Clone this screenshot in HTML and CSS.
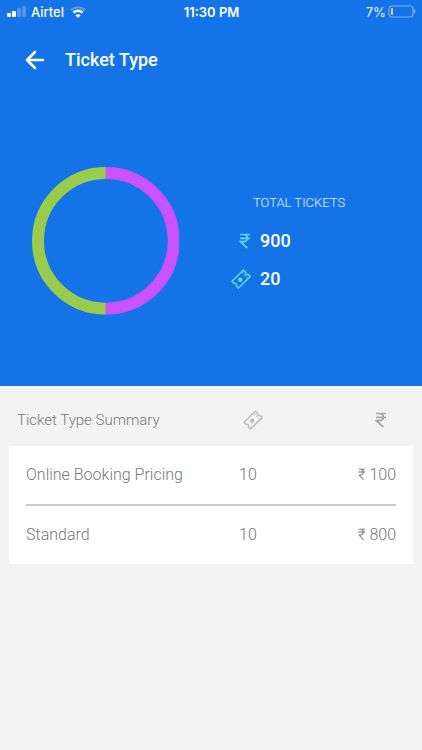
FILE: index.html
```html
<!DOCTYPE html>
<html lang="en">
<head>
<meta charset="utf-8">
<meta name="viewport" content="width=device-width, initial-scale=1">
<title>Ticket Type</title>
<link rel="stylesheet" href="styles.css">
</head>
<body>
<svg class="defs" aria-hidden="true">
  <symbol id="ticket" viewBox="0 0 20 20">
    <g fill="none" stroke="currentColor" stroke-width="1.5" stroke-linejoin="round">
      <path d="M1 12.2 12.6 1 L14.6 3 C14 4.600 15.400 6.200 17.200 5.400 L19.200 7.600 7.400 19 5.400 17 C6.200 15.200 4.600 13.800 3 14.400 Z"/>
      <path d="m11 3.200 1.300 1.400m1.200 1.300 1.100 1.200m1.200 1.300 1.100 1.200" stroke-width="1.200"/>
    </g>
    <circle cx="9.300" cy="10.800" r="2.200" fill="currentColor"/>
  </symbol>
  <symbol id="rupee" viewBox="0 0 12 16">
    <path d="M1 1.500h10M1 5.300h10M1 1.500h3.200c5.400 0 5.400 7.200 0 7.200H1.500L8.300 15.200" fill="none" stroke="currentColor" stroke-width="1.700"/>
  </symbol>
</svg>
<header class="hero">
  <div class="status">
    <div class="carrier">
      <svg width="20" height="12" viewBox="0 0 20 12" fill="#fff" aria-hidden="true">
        <rect x="0" y="7" width="4" height="4" rx="1"/>
        <rect x="5" y="5" width="4" height="6" rx="1"/>
        <rect x="10" y="2" width="4" height="9" rx="1" opacity=".25"/>
        <rect x="15" y="0" width="4" height="11" rx="1" opacity=".25"/>
      </svg>
      <span>Airtel</span>
      <svg width="16" height="12" viewBox="0 0 16 12" fill="none" stroke="#fff" stroke-width="2" aria-hidden="true">
        <path d="M1 4.200C5 .2 11 .2 15 4.200" opacity=".3"/>
        <path d="M3.400 6.700c2.600-2.600 6.600-2.600 9.200 0" stroke-width="2.400"/>
        <path d="M5.400 9.200c1.400-1.400 3.800-1.400 5.200 0L8 12z" fill="#fff" stroke="none"/>
      </svg>
    </div>
    <time class="clock">11:30 PM</time>
    <div class="battery">
      <span>7%</span>
      <svg width="28" height="14" viewBox="0 0 28 14" aria-hidden="true">
        <rect x="1" y="1" width="24" height="11" rx="3" fill="none" stroke="#78aff5" stroke-width="1.200"/>
        <path d="M26 4.500c2 .5 2 3.500 0 4z" fill="#78aff5"/>
        <rect x="3" y="3" width="2" height="7" rx="1" fill="#f2d35c"/>
      </svg>
    </div>
  </div>
  <nav class="bar">
    <button class="back" type="button" aria-label="Back">
      <svg width="20" height="20" viewBox="0 0 20 20" fill="none" stroke="#fff" stroke-width="2.600" stroke-linecap="round" stroke-linejoin="round"><path d="M18 10H2.500M10 2 2 10l8 8"/></svg>
    </button>
    <h1>Ticket Type</h1>
  </nav>
  <section class="overview">
    <svg class="donut" viewBox="0 0 148 148" fill="none" stroke-width="12" role="img" aria-label="Tickets by type">
      <path d="M74 6a68 68 0 0 0 0 136" stroke="#9bcb4c"/>
      <path d="M74 6a68 68 0 0 1 0 136" stroke="#cb52ff"/>
    </svg>
    <div class="totals">
      <h2>TOTAL TICKETS</h2>
      <p><svg class="rupee"><use href="#rupee"/></svg><b>900</b></p>
      <p><svg class="ticket"><use href="#ticket"/></svg><b>20</b></p>
    </div>
  </section>
</header>
<main>
  <table class="summary">
    <thead>
      <tr>
        <th scope="col">Ticket Type Summary</th>
        <th scope="col" class="count" aria-label="Tickets"><svg class="ticket"><use href="#ticket"/></svg></th>
        <th scope="col" class="amount" aria-label="Amount"><svg class="rupee"><use href="#rupee"/></svg></th>
      </tr>
    </thead>
    <tbody>
      <tr><td>Online Booking Pricing</td><td class="count">10</td><td class="amount">₹ 100</td></tr>
      <tr><td>Standard</td><td class="count">10</td><td class="amount">₹ 800</td></tr>
    </tbody>
  </table>
</main>
</body>
</html>
```
FILE: styles.css
```css
* { box-sizing: border-box; }
body {
  margin: 0;
  background: #f3f3f4;
  color: #787878;
  font: 300 16px/20px Roboto, sans-serif;
}
h1, h2, p { margin: 0; }
svg { display: block; flex: none; }
.defs { position: absolute; width: 0; height: 0; }
.rupee { width: 12px; height: 16px; }
.ticket { width: 20px; height: 20px; }

.hero {
  padding-bottom: 71px;
  background: #1473e6;
  color: #fff;
}
.status {
  display: grid;
  grid-template-columns: 1fr auto 1fr;
  align-items: center;
  height: 24px;
  padding: 0 6px 0 7px;
  font: 500 13px/16px Inter, sans-serif;
}
.carrier, .battery { display: flex; align-items: center; }
.carrier { gap: 4px; }
.carrier svg:last-child { margin-left: 2px; }
.clock { font-weight: 600; }
.battery { justify-content: flex-end; gap: 2px; color: #d6e6fb; }

.bar {
  display: flex;
  align-items: center;
  gap: 20px;
  height: 71px;
  padding-left: 25px;
}
.back {
  padding: 0;
  border: 0;
  background: none;
  cursor: pointer;
}
.bar h1 { font-size: 18px; font-weight: 500; line-height: 24px; }

.overview {
  display: grid;
  grid-template-columns: 1fr 1fr;
  align-items: center;
  padding-top: 72px;
}
.donut { width: 70%; max-width: 240px; justify-self: center; }
.totals {
  display: grid;
  gap: 18px;
  padding-left: 20px;
}
.totals h2 {
  padding-left: 22px;
  color: #e4effc;
  font-size: 13px;
  font-weight: 300;
}
.totals p {
  display: grid;
  grid-template-columns: 20px auto;
  gap: 9px;
  align-items: center;
  color: #5fd6df;
}
.totals .rupee { justify-self: end; }
.totals b { color: #fff; font-size: 18px; font-weight: 500; }

.summary {
  display: block;
  margin: 0 9px;
}
.summary thead, .summary tbody { display: block; }
.summary tr {
  display: grid;
  grid-template-columns: 1fr 60px 97px;
  align-items: center;
}
.summary th, .summary td { padding: 0; text-align: left; font-weight: 300; }
.summary thead { padding: 0 17px 0 8px; font-size: 15px; }
.summary thead tr { height: 60px; padding-top: 8px; }
.summary thead .count { padding-left: 4px; color: #bdbdbd; }
.summary thead .amount { padding-right: 9px; color: #a5a5a5; }
.summary thead .rupee { margin-left: auto; }
.summary tbody { padding: 0 17px; background: #fff; }
.summary tbody tr { height: 58px; }
.summary tbody tr + tr { height: 60px; border-top: 2px solid #ccc; }
.summary tbody .amount { text-align: right; }
```
